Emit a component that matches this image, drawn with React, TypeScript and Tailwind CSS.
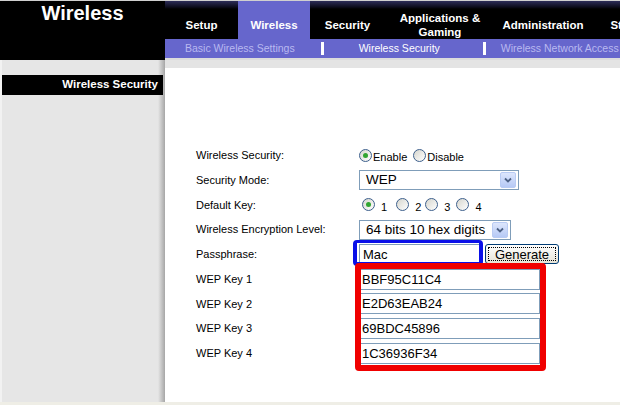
import React from "react";

const tabs = [
  { label: "Setup", w: "w-[73px]" },
  { label: "Wireless", w: "w-[72px]", active: true },
  { label: "Security", w: "w-[75px]" },
  { label: "Applications &\nGaming", w: "w-[110px]" },
  { label: "Administration", w: "w-[96px]" },
  { label: "Status", w: "w-[74px]" },
];

function Radio({ checked }: { checked?: boolean }) {
  return (
    <span className="flex h-[13px] w-[13px] shrink-0 items-center justify-center rounded-full border border-[#3d5f8c] bg-gradient-to-br from-[#d6d6ce] to-white">
      {checked && <span className="h-[5px] w-[5px] rounded-full bg-[#31a531]" />}
    </span>
  );
}

function Chevron() {
  return (
    <span className="flex h-[16px] w-[16px] items-center justify-center rounded-[2px] border border-[#b9cbf3] bg-gradient-to-b from-[#dde6fc] to-[#b6c9f5]">
      <svg width="8" height="6" viewBox="0 0 8 6">
        <path d="M1 1.5 L4 4.5 L7 1.5" stroke="#4d6185" strokeWidth="1.8" fill="none" />
      </svg>
    </span>
  );
}

function Select({ value, width }: { value: string; width: string }) {
  return (
    <div className={`flex h-[20px] ${width} items-center justify-between border border-[#7f9db9] bg-white pl-[6px] pr-[2px]`}>
      <span className="text-[13.5px] leading-none text-black">{value}</span>
      <Chevron />
    </div>
  );
}

function KeyInput({ value }: { value: string }) {
  return (
    <div className="flex h-[21px] w-[181px] items-center border border-[#7f9db9] bg-white pl-[2px]">
      <span className="text-[13px] leading-none text-black">{value}</span>
    </div>
  );
}

function Row({ label, children }: { label: string; children: React.ReactNode }) {
  return (
    <div className="flex h-[24.75px] items-center">
      <div className="w-[163px] text-[11px] text-black">{label}</div>
      <div className="flex items-center">{children}</div>
    </div>
  );
}

export default function App() {
  return (
    <div className="flex h-[405px] w-[620px] flex-col overflow-hidden bg-white font-['Liberation_Sans',Arial,sans-serif]">
      <div className="h-[1px] bg-[#cfcfcf]" />
      {/* header */}
      <div className="flex h-[59px]">
        <div className="flex w-[165px] justify-center bg-black pt-[1px]">
          <span className="text-[20px] font-bold leading-[22px] text-white">Wireless</span>
        </div>
        <div className="flex flex-1 flex-col overflow-hidden">
          <div className="flex h-[38px] bg-[linear-gradient(to_bottom,#2c2c58_0,#0c0c1c_6px,#000_8px)]">
            {tabs.map((t) => (
              <div
                key={t.label}
                className={`flex shrink-0 ${t.w} items-center justify-center whitespace-pre pt-[9px] text-center text-[11.5px] font-bold leading-[14px] text-white ${
                  t.active ? "bg-[#6666cc]" : ""
                }`}
              >
                {t.label}
              </div>
            ))}
          </div>
          <div className="flex h-[19px] items-center whitespace-nowrap bg-[#6666cc] text-[10.5px]">
            <span className="ml-[20px] text-[#b9b9f0]">Basic Wireless Settings</span>
            <span className="ml-[26px] h-[13px] w-[3px] bg-white" />
            <span className="ml-[35px] text-white">Wireless Security</span>
            <span className="ml-[43px] h-[13px] w-[3px] bg-white" />
            <span className="ml-[15px] text-[#b9b9f0]">Wireless Network Access</span>
          </div>
          <div className="h-[2px] bg-[#dcdcdc]" />
        </div>
      </div>

      {/* body */}
      <div className="flex flex-1">
        <div className="w-[165px] border-l-2 border-[#f2f2f2] bg-[linear-gradient(to_right,#e6e6e6_0,#e6e6e6_156px,#a6a6a6_163px,#ffffff_163px)] pt-[15px]">
          <div className="flex h-[20px] w-[161px] items-center justify-end bg-black pr-[5px] text-[11.5px] font-bold text-white">
            Wireless Security
          </div>
        </div>
        <div className="flex flex-1 flex-col">
          <div className="h-[8px] bg-[#e4e4e4]" />
          <div className="relative flex-1 pl-[31px] pt-[75px]">
            <Row label="Wireless Security:">
              <Radio checked />
              <span className="ml-[1px] mt-[3px] text-[11px]">Enable</span>
              <span className="ml-[6px]"><Radio /></span>
              <span className="ml-[1px] mt-[3px] text-[11px]">Disable</span>
            </Row>
            <Row label="Security Mode:">
              <Select value="WEP" width="w-[160px]" />
            </Row>
            <Row label="Default Key:">
              <span className="ml-[3px]"><Radio checked /></span>
              <span className="ml-[6px] mt-[4px] text-[11px]">1</span>
              <span className="ml-[9px]"><Radio /></span>
              <span className="ml-[6px] mt-[4px] text-[11px]">2</span>
              <span className="ml-[4px]"><Radio /></span>
              <span className="ml-[6px] mt-[4px] text-[11px]">3</span>
              <span className="ml-[6px]"><Radio /></span>
              <span className="ml-[6px] mt-[4px] text-[11px]">4</span>
            </Row>
            <Row label="Wireless Encryption Level:">
              <Select value="64 bits 10 hex digits" width="w-[152px]" />
            </Row>
            <Row label="Passphrase:">
              <div className="flex h-[21px] w-[122px] items-center border border-[#7f9db9] bg-white pl-[3px]">
                <span className="text-[13px] leading-none">Mac</span>
              </div>
              <button className="ml-[4px] flex h-[20px] w-[74px] items-center justify-center rounded-[3px] border border-[#003c74] bg-gradient-to-b from-white to-[#e6e3d6] p-[2px]">
                <span className="flex h-full w-full items-center justify-center border border-dotted border-black text-[13px] leading-none">
                  Generate
                </span>
              </button>
            </Row>
            <Row label="WEP Key 1">
              <KeyInput value="BBF95C11C4" />
            </Row>
            <Row label="WEP Key 2">
              <KeyInput value="E2D63EAB24" />
            </Row>
            <Row label="WEP Key 3">
              <KeyInput value="69BDC45896" />
            </Row>
            <Row label="WEP Key 4">
              <KeyInput value="1C36936F34" />
            </Row>

            {/* hand-drawn annotations */}
            <div className="pointer-events-none absolute left-[188px] top-[172px] h-[26px] w-[130px] rounded-[4px] border-[4px] border-t-[3px] border-[#0a10e8]" />
            <div className="pointer-events-none absolute left-[190px] top-[195px] h-[108px] w-[191px] rounded-[4px] border-[6px] border-[#f00000]" />
          </div>
        </div>
      </div>
      <div className="h-[3px] bg-[#efeee6]" />
    </div>
  );
}
